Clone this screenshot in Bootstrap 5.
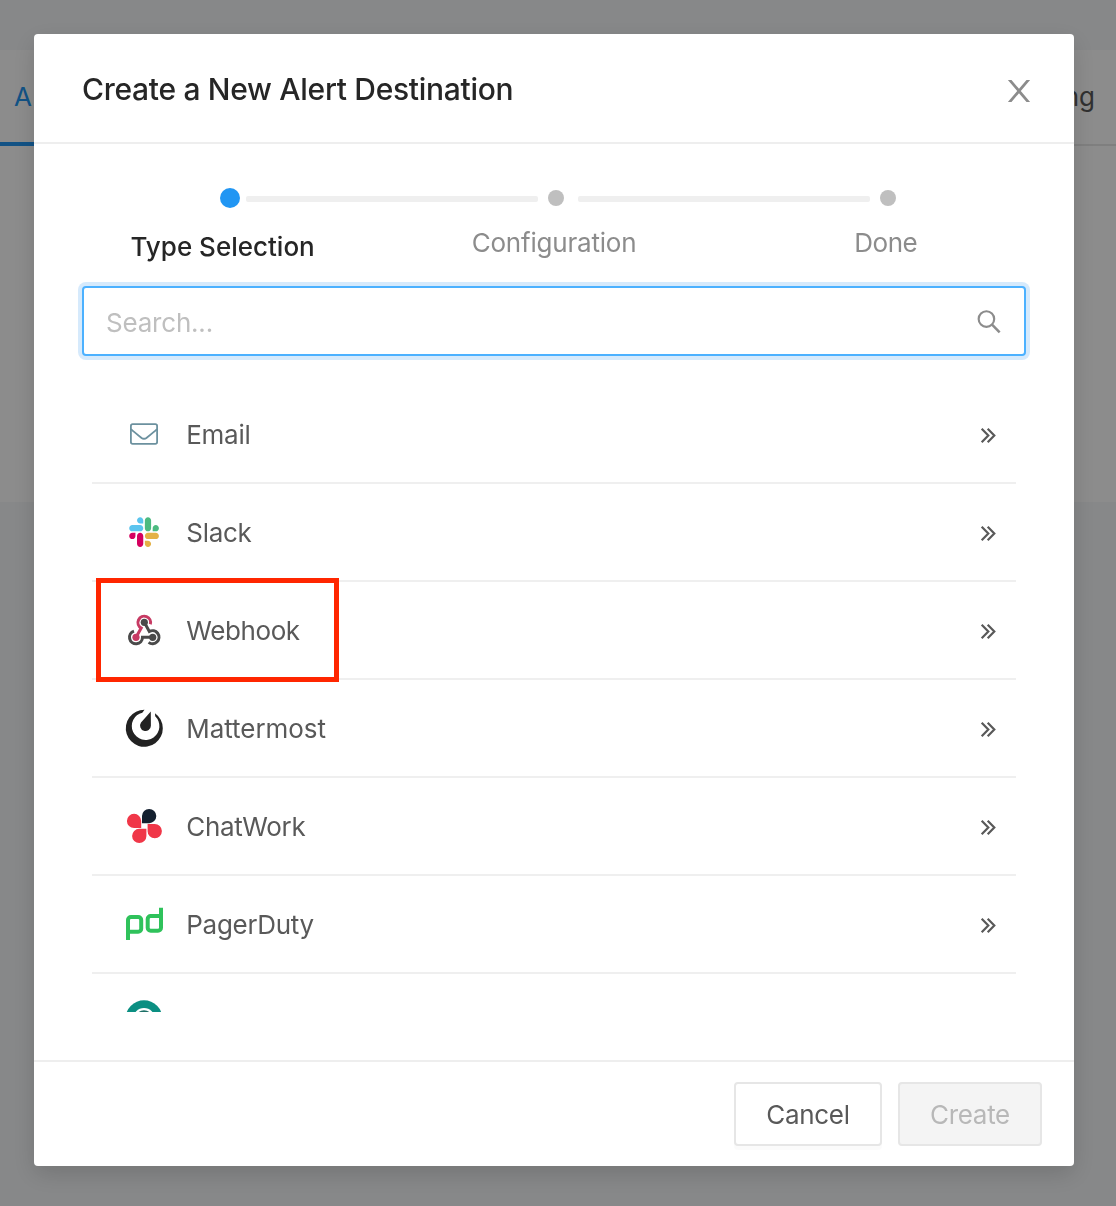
<!DOCTYPE html>
<html lang="en">
<head>
<meta charset="utf-8">
<meta name="viewport" content="width=device-width, initial-scale=1">
<title>Create a New Alert Destination</title>
<link rel="stylesheet" href="https://cdn.jsdelivr.net/npm/bootstrap@5.3.0/dist/css/bootstrap.min.css">
<style>
body{font-family:Inter,"Liberation Sans",sans-serif;font-size:26px;line-height:40px;color:#595959;background:#f6f8f9;height:1206px;overflow:hidden}
.panel-top{height:50px}
.panel{height:452px;background:#fff}
.tabs{height:96px;border-bottom:2px solid #e8e8e8}
.tab-on{width:200px;height:96px;padding:27px 0 0 14px;color:#2196f3;border-bottom:4px solid #2196f3}
.tab-last{padding:27px 21px 0 0}
.mask{background:rgba(0,0,0,.45);overflow:hidden!important}
.sheet{width:1040px;max-width:1040px;margin:34px 0 0 34px}
.sheet .modal-content{height:1132px;border:0;border-radius:4px;box-shadow:0 8px 24px rgba(0,0,0,.15);color:#595959}
.sheet .modal-header{height:110px;padding:0 42px 0 48px;border-bottom:2px solid #eee;border-radius:0}
.sheet .modal-title{font-size:30px;line-height:44px;font-weight:500;color:#262626;padding-top:2px;white-space:nowrap;letter-spacing:-.3px}
.close-x{margin-top:5px}
.sheet .modal-body{padding:40px 48px 0}
.sheet .modal-footer{height:106px;padding:0 32px;border-top:2px solid #eee;gap:16px}
.sheet .modal-footer>*{margin:0}
.rail{height:28px;padding-left:138px}
.dot{width:16px;height:16px;border-radius:50%;background:#bfbfbf}
.dot-on{width:20px;height:20px;background:#2196f3}
.bar{width:292px;height:6px;border-radius:2px;background:#efefef;margin:2px 10px 0 14px}
.dot-on + .bar{margin-left:6px}
.labels{height:74px;color:#8c8c8c}
.labels span{white-space:nowrap}
.lab1{width:341px;padding:15px 0 0 48.5px;font-weight:500;color:#262626}
.lab2{width:383px;padding:11px 0 0 48.7px;letter-spacing:-.2px}
.lab3{padding:11px 0 0 48.3px;letter-spacing:-.5px}
.find{height:70px;border:2px solid #4cb1ff;border-radius:4px;box-shadow:0 0 0 4px #d6eafc;padding:0 22px;background:#fff}
.find input{font-size:26px;color:#595959;padding:4px 0 0;line-height:40px;letter-spacing:-.2px}
.find input::placeholder{color:#bfbfbf;opacity:1}
.dests{margin:30px 10px 0;height:626px;overflow:hidden}
.dests .list-group-item{height:98px;flex:none;border:0;border-bottom:2px solid #efefef;border-radius:0;padding:0 20px 0 32px;color:#595959;background:#fff}
.logo{width:40px;height:40px;margin-right:22.300px;flex:none;overflow:visible}
.dest-name{padding-top:2px;letter-spacing:-.3px}
.tight{letter-spacing:-.4px}
.wide{letter-spacing:-.05px}
.go{width:16px;height:16px;margin-left:auto;margin-top:3px}
.sheet .btn{height:64px;font-size:26px;border:2px solid #e6e6e6;border-radius:4px;padding:0;letter-spacing:-.3px}
.b-cancel{width:148px;color:#595959;background:#fff;box-shadow:0 4px 0 rgba(0,0,0,.016)}
.sheet .btn:disabled{width:144px;color:#b8b8b8;background:#f4f4f4;opacity:1}
.callout{position:absolute;left:62px;top:544px;width:243px;height:104px;border:5px solid #ff2600}
</style>
</head>
<body>
<svg class="d-none"><symbol id="go" viewBox="0 0 16 16"><path d="M1.700 .8 8.300 7.500 1.700 14.200M7.700 .8 14.300 7.500 7.700 14.200" fill="none" stroke="#595959" stroke-width="2.200"/></symbol></svg>
<div class="panel-top"></div>
<div class="panel"><div class="tabs d-flex justify-content-between"><div class="tab-on">A</div><div class="tab-last">ng</div></div></div>

<div class="modal d-block mask" tabindex="-1">
<div class="modal-dialog sheet"><div class="modal-content">
<div class="modal-header d-flex align-items-center justify-content-between">
<h1 class="modal-title">Create a New Alert Destination</h1>
<svg class="close-x" width="26" height="26" viewBox="0 0 26 26" fill="#8c8c8c"><path d="M1.900 2h3.600L13 10.800 20.500 2h3.600L14.800 13 24.100 24h-3.600L13 15.200 5.500 24h-3.600L11.200 13z"/></svg>
</div>
<div class="modal-body">
<div class="rail d-flex align-items-center"><span class="dot dot-on"></span><span class="bar"></span><span class="dot"></span><span class="bar"></span><span class="dot"></span></div>
<div class="labels d-flex"><span class="lab1">Type Selection</span><span class="lab2">Configuration</span><span class="lab3">Done</span></div>
<div class="find d-flex align-items-center"><input class="form-control border-0 shadow-none bg-transparent" placeholder="Search...">
<svg width="26" height="26" viewBox="0 0 26 26" fill="none" stroke="#8c8c8c" stroke-width="2.200"><circle cx="9.700" cy="11" r="8"/><path d="m15.500 16.800 7.800 8" stroke-width="2.600"/></svg></div>

<div class="list-group dests">
<div class="list-group-item d-flex align-items-center">
<svg class="logo" viewBox="0 0 40 40" fill="none" stroke="#6c919f" stroke-width="1.800"><rect x="6.900" y="10.200" width="26.200" height="19.600" rx="1.800"/><path d="M7 15.200c3.500 3.300 7 6 10.200 8.500 2 1.500 3.600 1.500 5.600 0 3.200-2.500 6.700-5.200 10.200-8.500"/></svg>
<span class="dest-name">Email</span><svg class="go"><use href="#go"/></svg></div>

<div class="list-group-item d-flex align-items-center">
<svg class="logo" viewBox="0 0 40 40"><g transform="translate(5.200 5.200) scale(.242)">
<path fill="#d5005f" d="M25.800 77.600c0 7.100-5.800 12.900-12.900 12.900S0 84.700 0 77.600s5.800-12.900 12.900-12.900h12.900v12.900zM32.300 77.600c0-7.100 5.800-12.900 12.900-12.900s12.900 5.800 12.900 12.900v32.300c0 7.100-5.800 12.900-12.900 12.900s-12.900-5.800-12.900-12.900V77.600z"/>
<path fill="#5bc4ee" d="M45.200 25.800c-7.100 0-12.900-5.800-12.900-12.900S38.100 0 45.200 0s12.900 5.800 12.900 12.900v12.900H45.200zM45.200 32.300c7.100 0 12.900 5.800 12.900 12.900s-5.800 12.900-12.900 12.900H12.900C5.800 58.100 0 52.300 0 45.200s5.800-12.900 12.900-12.900h32.300z"/>
<path fill="#4cba80" d="M97 45.200c0-7.100 5.800-12.900 12.900-12.900s12.900 5.800 12.900 12.900-5.800 12.900-12.900 12.900H97V45.200zM90.500 45.200c0 7.100-5.800 12.900-12.900 12.900s-12.900-5.800-12.900-12.900V12.900C64.700 5.800 70.500 0 77.600 0s12.900 5.800 12.900 12.900v32.300z"/>
<path fill="#e4b146" d="M77.600 97c7.100 0 12.900 5.800 12.900 12.900s-5.800 12.900-12.900 12.900-12.900-5.800-12.900-12.900V97h12.900zM77.600 90.500c-7.100 0-12.900-5.800-12.900-12.900s5.800-12.900 12.900-12.900h32.300c7.100 0 12.900 5.800 12.900 12.900s-5.800 12.900-12.900 12.900H77.600z"/></g></svg>
<span class="dest-name">Slack</span><svg class="go"><use href="#go"/></svg></div>

<div class="list-group-item d-flex align-items-center">
<svg class="logo" viewBox="0 0 40 40" fill="none" stroke-width="3"><path stroke="#c73a63" d="M12 27.300 17.200 18A6.300 6.300 0 1 1 26.300 14.300"/><path stroke="#4a4a4a" d="M20.300 12.300 25.300 21.500A6.500 6.500 0 1 1 24.600 32.400M28.700 27.300H18.500A6.500 6.500 0 1 1 10 21.100"/><g stroke="none"><circle cx="12" cy="27.300" r="3.600" fill="#c73a63"/><circle cx="20.300" cy="12.300" r="3.600" fill="#4a4a4a"/><circle cx="28.700" cy="27.300" r="3.600" fill="#4a4a4a"/></g></svg>
<span class="dest-name tight">Webhook</span><svg class="go"><use href="#go"/></svg></div>

<div class="list-group-item d-flex align-items-center">
<svg class="logo" viewBox="0 0 40 40" fill="#222"><path d="M20.500 1.800A18.500 18.500 0 1 0 31 5.200L31.200 8.200A13.800 13.800 0 1 1 18.300 4.700zM26.800 3.600 17 14.600A5.400 5.400 0 1 0 26.900 17.700z"/></svg>
<span class="dest-name wide">Mattermost</span><svg class="go"><use href="#go"/></svg></div>

<div class="list-group-item d-flex align-items-center">
<svg class="logo" viewBox="0 0 40 40" fill="#f03748"><path fill="#14202f" d="M18 17.200V10.100a7.150 7.150 0 1 1 7.150 7.100z"/><path d="M17.200 22.100H10.100a7.150 7.150 0 1 1 7.100-7.150zM22.400 22.800V29.900a7.150 7.150 0 1 1-7.150-7.100zM23.600 18H30.700a7.150 7.150 0 1 1-7.100 7.150z"/></svg>
<span class="dest-name">ChatWork</span><svg class="go"><use href="#go"/></svg></div>

<div class="list-group-item d-flex align-items-center">
<svg class="logo" viewBox="0 0 40 40" fill="none" stroke="#2fc25b" stroke-width="4"><path d="M4 36V16a3 3 0 0 1 3-3H14.200a3 3 0 0 1 3 3V24.700a3 3 0 0 1-3 3H4M37 3.700V23.700a3 3 0 0 1-3 3H26.700a3 3 0 0 1-3-3V15a3 3 0 0 1 3-3H37"/></svg>
<span class="dest-name">PagerDuty</span><svg class="go"><use href="#go"/></svg></div>

<div class="list-group-item d-flex align-items-center">
<svg class="logo" viewBox="0 0 40 40"><circle cx="20" cy="16.800" r="18.500" fill="#0b8f82"/><circle cx="20" cy="17" r="11" fill="#fff"/><circle cx="20" cy="17" r="8.800" fill="#1c6f66"/></svg></div>
</div>
</div>
<div class="modal-footer"><button class="btn b-cancel">Cancel</button><button class="btn" disabled>Create</button></div>
<div class="callout"></div>
</div></div></div>
<script src="https://cdn.jsdelivr.net/npm/bootstrap@5.3.0/dist/js/bootstrap.bundle.min.js"></script>
</body>
</html>
